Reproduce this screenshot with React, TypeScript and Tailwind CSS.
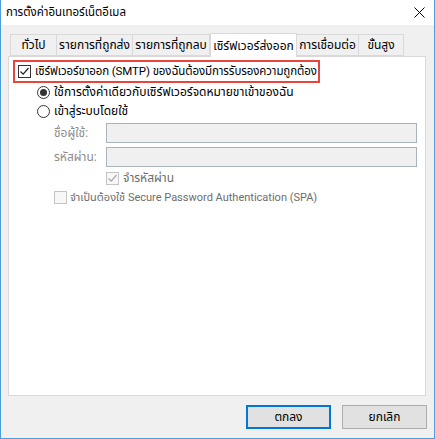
import React from "react";

const FONT = { fontFamily: '"Leelawadee UI", "Segoe UI", Roboto, "Noto Sans Thai", sans-serif' };

const tabs = [
  { label: "ทั่วไป", w: "w-[47px]" },
  { label: "รายการที่ถูกส่ง", w: "w-[77px]" },
  { label: "รายการที่ถูกลบ", w: "w-[78px]" },
  { label: "เซิร์ฟเวอร์ส่งออก", w: "w-[87px]", active: true },
  { label: "การเชื่อมต่อ", w: "w-[63px]" },
  { label: "ขั้นสูง", w: "w-[46px]" },
];

function CheckMark({ color }: { color: string }) {
  return (
    <svg width="11" height="11" viewBox="0 0 11 11">
      <path d="M1.5 5.5 L4.2 8.2 L9.5 2" fill="none" stroke={color} strokeWidth="1.2" />
    </svg>
  );
}

export default function App() {
  return (
    <div
      className="w-[435px] h-[439px] bg-[#f0f0f0] border-x border-b border-[#4a9fdc] flex flex-col text-[12px] text-black leading-none whitespace-nowrap"
      style={FONT}
    >
      {/* title bar */}
      <div className="h-[25px] bg-white flex items-center justify-between pl-[5px] pr-[9px] shrink-0">
        <span className="text-[11.5px]">การตั้งค่าอินเทอร์เน็ตอีเมล</span>
        <svg width="11" height="11" viewBox="0 0 11 11">
          <path d="M0.5 0.5 L10.5 10.5 M10.5 0.5 L0.5 10.5" stroke="#000" strokeWidth="1" />
        </svg>
      </div>

      <div className="flex flex-col pl-[7px] pr-[8px] pt-[8px]">
        {/* tabs */}
        <div className="flex items-end h-[23px] pl-[2px] relative z-10">
          {tabs.map((t) =>
            t.active ? (
              <div
                key={t.label}
                className={`${t.w} h-[24px] -mb-px bg-white border border-b-0 border-[#d9d9d9] flex items-center justify-center`}
              >
                {t.label}
              </div>
            ) : (
              <div
                key={t.label}
                className={`${t.w} h-[22px] bg-[#f0f0f0] border border-[#d9d9d9] -ml-px first:ml-0 flex items-center justify-center`}
              >
                {t.label}
              </div>
            )
          )}
        </div>

        {/* panel */}
        <div className="h-[340px] bg-white border border-[#d9d9d9] flex flex-col items-start pl-[4px] pt-[3px]">
          <div className="w-[307px] h-[23px] border-2 border-[#e8453c] flex items-center pl-[3px] gap-[4px]">
            <div className="w-[13px] h-[13px] shrink-0 border border-[#333] bg-white flex items-center justify-center">
              <CheckMark color="#222" />
            </div>
            <span className="text-[11.5px] tracking-[-0.1px]">เซิร์ฟเวอร์ขาออก (SMTP) ของฉันต้องมีการรับรองความถูกต้อง</span>
          </div>

          <div className="flex items-center gap-[4px] ml-[24px] h-[18px]">
            <div className="w-[13px] h-[13px] rounded-full border border-[#333] bg-white flex items-center justify-center">
              <div className="w-[7px] h-[7px] rounded-full bg-[#333]" />
            </div>
            <span>ใช้การตั้งค่าเดียวกับเซิร์ฟเวอร์จดหมายขาเข้าของฉัน</span>
          </div>

          <div className="flex items-center gap-[4px] ml-[24px] mt-[1px] h-[18px]">
            <div className="w-[13px] h-[13px] rounded-full border border-[#333] bg-white" />
            <span>เข้าสู่ระบบโดยใช้</span>
          </div>

          <div className="flex items-center ml-[41px] mt-[3px] h-[20px]">
            <span className="w-[52px] text-[#8d8d8d]">ชื่อผู้ใช้:</span>
            <div className="w-[311px] h-[20px] bg-[#f0f0f0] border border-[#a9b3bd]" />
          </div>

          <div className="flex items-center ml-[41px] mt-[4px] h-[20px]">
            <span className="w-[52px] text-[#8d8d8d]">รหัสผ่าน:</span>
            <div className="w-[311px] h-[20px] bg-[#f0f0f0] border border-[#a9b3bd]" />
          </div>

          <div className="flex items-center gap-[4px] ml-[93px] mt-[3px] h-[16px]">
            <div className="w-[13px] h-[13px] border border-[#c4c4c4] bg-[#f7f7f7] flex items-center justify-center">
              <CheckMark color="#a8a8a8" />
            </div>
            <span className="text-[#6d6d6d]">จำรหัสผ่าน</span>
          </div>

          <div className="flex items-center gap-[3px] ml-[41px] mt-[3px] h-[16px]">
            <div className="w-[13px] h-[13px] border border-[#c4c4c4] bg-[#f7f7f7]" />
            <span className="text-[11px] text-[#6d6d6d]">จำเป็นต้องใช้ Secure Password Authentication (SPA)</span>
          </div>
        </div>

        {/* buttons */}
        <div className="flex justify-end gap-[11px] mt-[9px] -mr-[1px]">
          <button className="w-[85px] h-[24px] bg-[#e1e1e1] border-2 border-[#0078d7] flex items-center justify-center">
            ตกลง
          </button>
          <button className="w-[85px] h-[24px] bg-[#e1e1e1] border border-[#adadad] flex items-center justify-center">
            ยกเลิก
          </button>
        </div>
      </div>
    </div>
  );
}
